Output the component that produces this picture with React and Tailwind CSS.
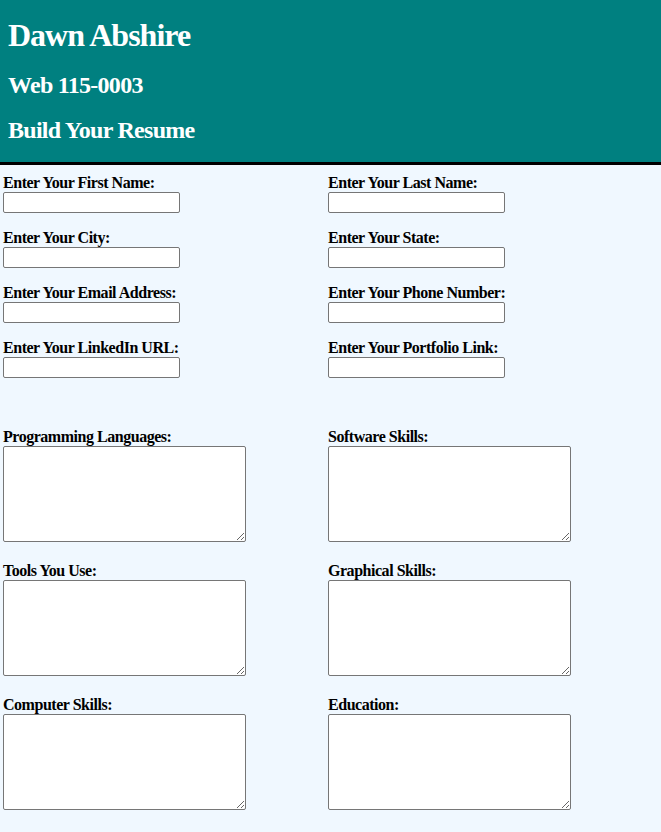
import React from "react";

const serif = { fontFamily: '"Liberation Serif", "Times New Roman", serif' };

function Field({ label }) {
  return (
    <div className="flex flex-col items-start">
      <label className="block text-[16px] leading-[18px] font-bold tracking-[-0.47px] text-black">{label}</label>
      <input
        type="text"
        className="block w-[177px] h-[21px] bg-white border border-[#767676] rounded-[2px] px-[2px] text-[13px] outline-none"
      />
    </div>
  );
}

function Area({ label }) {
  return (
    <div className="flex flex-col items-start">
      <label className="block text-[16px] leading-[18px] font-bold tracking-[-0.47px] text-black">{label}</label>
      <textarea className="block w-[243px] h-[96px] bg-white border border-[#767676] rounded-[2px] p-[2px] text-[13px] outline-none resize" />
    </div>
  );
}

export default function App() {
  return (
    <div className="min-h-screen bg-[#f0f8ff] text-black" style={serif}>
      <header className="bg-[#008080] text-white px-[8px] pt-[17px] pb-[18px] border-b-[3px] border-black">
        <h1 className="text-[32px] leading-[36px] font-bold tracking-[-1px]">Dawn Abshire</h1>
        <h2 className="mt-[18px] text-[24px] leading-[28px] font-bold tracking-[-0.72px]">Web 115-0003</h2>
        <h2 className="mt-[17px] text-[24px] leading-[28px] font-bold tracking-[-0.72px]">Build Your Resume</h2>
      </header>
      <main className="px-[3px] pt-[9px] pb-[22px]">
        <div className="grid grid-cols-[325px_1fr] gap-y-[16px]">
          <Field label="Enter Your First Name:" />
          <Field label="Enter Your Last Name:" />
          <Field label="Enter Your City:" />
          <Field label="Enter Your State:" />
          <Field label="Enter Your Email Address:" />
          <Field label="Enter Your Phone Number:" />
          <Field label="Enter Your LinkedIn URL:" />
          <Field label="Enter Your Portfolio Link:" />
        </div>
        <div className="mt-[50px] grid grid-cols-[325px_1fr] gap-y-[20px]">
          <Area label="Programming Languages:" />
          <Area label="Software Skills:" />
          <Area label="Tools You Use:" />
          <Area label="Graphical Skills:" />
          <Area label="Computer Skills:" />
          <Area label="Education:" />
        </div>
      </main>
    </div>
  );
}
